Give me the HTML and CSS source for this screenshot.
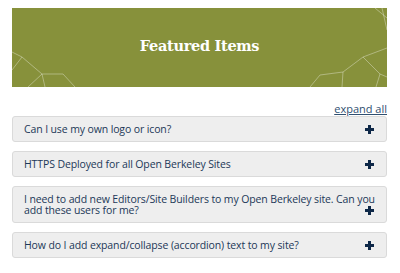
FILE: index.html
```html
<!DOCTYPE html>
<html>

<head>
    <title>Featured Items</title>
    <meta charset="utf-8">
    <meta name="viewport" content="width=device-width">
    <link rel="stylesheet" href="styles.css">
</head>

<body>
    <div id="container">
        <div class="banner">
            <svg class="shapes" width="375" height="79" viewBox="0 0 375 79">
                <g fill="none" stroke="rgba(255,255,255,0.35)" stroke-width="1">
                    <path d="M0 44 L10 49 L30 66 L51 66 L63 79" />
                    <path d="M10 49 L0 62" />
                    <path d="M30 66 L16 79" />
                    <path d="M30 66 L33 79" />
                    <path d="M363 0 L375 10" />
                    <path d="M370 0 L375 22" />
                    <path d="M375 40 L351 49 L331 64 L308 67 L298 79" />
                    <path d="M331 64 L330 79" />
                    <path d="M351 49 L368 66 L375 69" />
                    <path d="M368 66 L364 79" />
                </g>
            </svg>
            <h1>Featured Items</h1>
        </div>

        <div class="controls">
            <a href="#" class="expand-all">expand all</a>
        </div>

        <div class="accordion">
            <div class="item"><span class="plus"></span>Can I use my own logo or icon?</div>
            <div class="item"><span class="plus"></span>HTTPS Deployed for all Open Berkeley Sites</div>
            <div class="item">I need to add new Editors/Site Builders to my Open Berkeley site. Can you add these users for me?<span class="plus"></span></div>
            <div class="item"><span class="plus"></span>How do I add expand/collapse (accordion) text to my site?</div>
        </div>
    </div>
</body>

</html>
```

FILE: styles.css
```css
html, body {
    margin: 0px;
    background-color: rgb(255, 255, 255);
}
#container {
    width: 375px;
    padding: 8px 13px 0px 12px;
    font-family: "Open Sans", sans-serif;
}
.banner {
    position: relative;
    height: 79px;
    background-color: rgb(135, 145, 59);
    display: grid;
    place-items: center;
    overflow: hidden;
}
.banner .shapes {
    position: absolute;
    left: 0;
    top: 0;
}
.banner h1 {
    position: relative;
    margin: 0px 0px 4px 0px;
    color: white;
    font-family: "DejaVu Serif", serif;
    font-weight: bold;
    font-size: 14.5px;
    letter-spacing: -0.3px;
}
.controls {
    text-align: right;
    margin-top: 15px;
    line-height: 14px;
    font-size: 11px;
}
.expand-all {
    color: rgb(47, 79, 112);
}
.accordion .item {
    background-color: rgb(238, 238, 238);
    border: 1px solid rgb(218, 218, 218);
    border-radius: 3px;
    padding: 7px 2px 6px 11px;
    margin-bottom: 9px;
    color: rgb(28, 56, 88);
    font-size: 10.5px;
    line-height: 11px;
    letter-spacing: -0.12px;
}
.plus {
    float: right;
    position: relative;
    width: 9px;
    height: 11px;
    margin: 0px 10px 0px 4px;
}
.plus::before, .plus::after {
    content: "";
    position: absolute;
    background-color: rgb(14, 40, 72);
}
.plus::before {
    left: 0px;
    top: 4px;
    width: 9px;
    height: 2.5px;
}
.plus::after {
    left: 3.25px;
    top: 0.75px;
    width: 2.5px;
    height: 9px;
}
```
